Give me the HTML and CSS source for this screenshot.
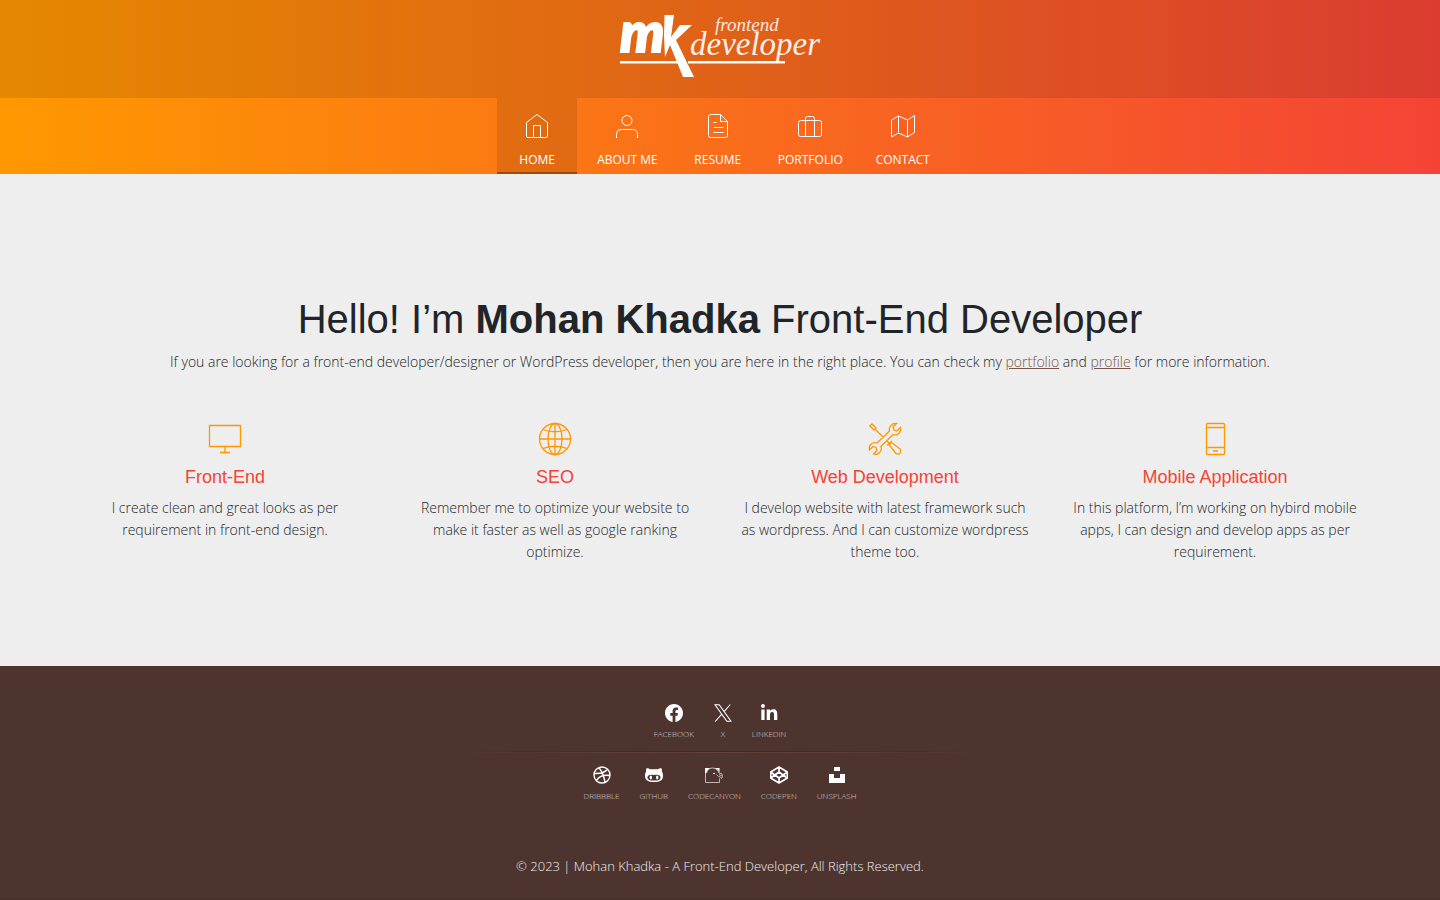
FILE: index.html
```html
<!DOCTYPE html>
<html lang="en">
<head>
<meta charset="utf-8">
<meta name="viewport" content="width=device-width, initial-scale=1">
<title>Mohan Khadka - Front-End Developer</title>
<link rel="stylesheet" href="styles.css">
</head>
<body>
<header class="header">
  <div class="brand">
    <a href="#" class="logo" aria-label="mk frontend developer">
      <svg width="200" height="66" viewBox="0 0 200 66">
        <text class="logo-m" x="0" y="37">m</text>
        <path d="M44.500 0h9.500l-3 22 9-12h12L56 25l18 37H63L50 30l-5 12-1-20z"/>
        <path d="M0 46h60v2.500H0zM68 46h97v2.500H68z"/>
        <text class="logo-top" x="95" y="16">frontend</text>
        <text class="logo-main" x="70" y="40">developer</text>
      </svg>
    </a>
  </div>
  <nav class="nav">
    <a href="#" class="nav-item active">
      <svg class="nav-icon" viewBox="0 0 26 26"><path d="M2.500 9.500 13 1.500l10.500 8V23q0 1.500-1.500 1.500H4Q2.500 24.500 2.500 23zM9.500 24.500v-12h7v12"/></svg>
      <span>HOME</span>
    </a>
    <a href="#" class="nav-item">
      <svg class="nav-icon" viewBox="0 0 26 26"><circle cx="13" cy="7.500" r="5"/><path d="M2.500 25v-3.500q0-5 5-5h11q5 0 5 5V25"/></svg>
      <span>ABOUT ME</span>
    </a>
    <a href="#" class="nav-item">
      <svg class="nav-icon" viewBox="0 0 26 26"><path d="M15.500 1.500h-10q-2 0-2 2v19q0 2 2 2h15q2 0 2-2v-14zv7h7M8.500 9.500h3M8.500 14.500h10M8.500 19.500h10"/></svg>
      <span>RESUME</span>
    </a>
    <a href="#" class="nav-item">
      <svg class="nav-icon" viewBox="0 0 26 26"><rect x="1.500" y="7.500" width="23" height="16" rx="2"/><path d="M8.500 23.500V5.500q0-2 2-2h5q2 0 2 2v18"/></svg>
      <span>PORTFOLIO</span>
    </a>
    <a href="#" class="nav-item">
      <svg class="nav-icon" viewBox="0 0 26 26"><path d="m1.500 7 7-4 9 4 7-4.500v17l-7 4.500-9-4-7 4zM8.500 3v17M17.500 7v17"/></svg>
      <span>CONTACT</span>
    </a>
  </nav>
</header>

<main class="main">
  <div class="container">
    <h1>Hello! I’m <strong>Mohan Khadka</strong> Front-End Developer</h1>
    <p class="intro">If you are looking for a front-end developer/designer or WordPress developer, then you are here in the right place. You can check my <a href="#">portfolio</a> and <a href="#">profile</a> for more information.</p>
    <div class="services">
      <section class="service">
        <svg class="service-icon" viewBox="0 0 34 34"><path d="M1.500 3.500h31v21h-31zM17 24.500v6M12 30.500h10"/></svg>
        <h2>Front-End</h2>
        <p>I create clean and great looks as per requirement in front-end design.</p>
      </section>
      <section class="service">
        <svg class="service-icon" viewBox="0 0 34 34"><circle cx="17" cy="17" r="15.500"/><ellipse cx="17" cy="17" rx="7" ry="15.500"/><path d="M17 1.500v31M1.500 17h31M5 7.500q12 4.500 24 0M5 26.500q12-4.500 24 0"/></svg>
        <h2>SEO</h2>
        <p>Remember me to optimize your website to make it faster as well as google ranking optimize.</p>
      </section>
      <section class="service">
        <svg class="service-icon" viewBox="0 0 34 34"><path d="M21.500 9c-1-4 2-8 7-7.500L25 5l1 3 3 1 3.500-3.500c1 5-3 8.500-7.500 7L13 24.500c1.500 5-3 9-7.500 7.500L9 28.500l-1-3-3-1L1.500 28c-1-5 3-8.500 7.500-7zM1.800 4 4 2l4 4-2 2zM7 7l8.500 8.500M18.500 18.500l4 4M19 23.500l5-4.500M21 22.500l6.500 8.500c3 3 7-1 4.500-4l-8.500-6.500"/></svg>
        <h2>Web Development</h2>
        <p>I develop website with latest framework such as wordpress. And I can customize wordpress theme too.</p>
      </section>
      <section class="service">
        <svg class="service-icon" viewBox="0 0 34 34"><rect x="8.500" y="1.500" width="18" height="31" rx="1"/><path d="M8.500 5.500h18M8.500 25.500h18M15 29h5"/></svg>
        <h2>Mobile Application</h2>
        <p>In this platform, I’m working on hybird mobile apps, I can design and develop apps as per requirement.</p>
      </section>
    </div>
  </div>
</main>

<footer class="footer">
  <div class="social">
    <a href="#"><svg viewBox="0 0 16 16"><path d="M16 8.049c0-4.446-3.582-8.050-8-8.050C3.580 0-.002 3.603-.002 8.050c0 4.017 2.926 7.347 6.750 7.951v-5.625h-2.030V8.050H6.750V6.275c0-2.017 1.195-3.131 3.022-3.131.876 0 1.791.157 1.791.157v1.980h-1.009c-.993 0-1.303.621-1.303 1.258v1.510h2.218l-.354 2.326H9.250V16c3.824-.604 6.750-3.934 6.750-7.951"/></svg><span>FACEBOOK</span></a>
    <a href="#"><svg viewBox="0 0 18 18"><path fill="none" stroke="#fff" stroke-width="1.100" d="M1 .7h4.200L17 17.300h-4.200zM16.300.5 10 7.700M7.800 10.200 1.200 17.500"/></svg><span>X</span></a>
    <a href="#"><svg viewBox="0 0 18 18"><path d="M1.300 5.500h3.300V16H1.300z"/><circle cx="2.950" cy="2" r="2"/><path d="M6.700 5.500h3.200v1.500C10.500 5.900 11.700 5.200 13.200 5.200c3.200 0 4.100 2 4.100 5V16H14v-5.100c0-1.600-.1-2.900-1.900-2.900-1.700 0-2.100 1.200-2.100 2.800V16H6.700z"/></svg><span>LINKEDIN</span></a>
  </div>
  <hr class="divider">
  <div class="social">
    <a href="#"><svg viewBox="0 0 18 18"><path fill="none" stroke="#fff" stroke-width="1.400" d="M9 1a8 8 0 1 0 0 16A8 8 0 0 0 9 1zM6 1.700Q10.500 7 12 16.300M1.300 7.500Q10.500 8 14.500 3.200M3.500 14.700Q7 8 17 9.500"/></svg><span>DRIBBBLE</span></a>
    <a href="#"><svg viewBox="0 0 18 18"><path fill-rule="evenodd" d="M1.500 2.200c1.800 0 3 .5 4 1h7c1-.5 2.200-1 4-1 .5 1.300.5 2.300.3 3.400C17.600 6.700 18 8 18 9.800c0 4.700-3 6.200-9 6.200s-9-1.500-9-6.200C0 8 .4 6.700 1.200 5.600 1 4.500 1 3.500 1.500 2.200zM6 8.800c-2.200 0-3.500 1-3.500 2.800 0 2.500 2.500 3 6.500 3s6.500-.5 6.500-3c0-1.800-1.300-2.800-3.500-2.800-1.200 0-2 .2-3 .2s-1.800-.2-3-.2z"/><ellipse cx="5.800" cy="11.500" rx="1.200" ry="2"/><ellipse cx="12.200" cy="11.500" rx="1.200" ry="2"/></svg><span>GITHUB</span></a>
    <a href="#"><svg viewBox="0 0 18 18"><path d="M0 2h6C3.500 3 2 4.500 1.500 7L0 8zM8.500 2h6v5Q13.500 3 8.500 2z"/><path fill="none" stroke="#cbc3c1" stroke-width=".9" d="M.5 7v9.500h14v-4M1.500 7Q3 2 7.500 2t6.500 5q3-.5 4 3l-1.500 2.500q-.5-2-3-2l-2-2M14 8.500l3 1.500"/><path d="M8 7h2v1H8z"/></svg><span>CODECANYON</span></a>
    <a href="#"><svg viewBox="0 0 18 18"><path fill="none" stroke="#fff" stroke-width="1.700" stroke-linejoin="round" d="m9 1 8.300 5v6L9 17 .7 12V6zM9 1v5M9 12v5M.7 6 9 12l8.300-6M.7 12 9 6l8.300 6"/></svg><span>CODEPEN</span></a>
    <a href="#"><svg viewBox="0 0 18 18"><path d="M6 1h6v4H6zM1 8h5v4h6V8h5v9H1z"/></svg><span>UNSPLASH</span></a>
  </div>
  <p class="copyright">© 2023 | Mohan Khadka - A Front-End Developer, All Rights Reserved.</p>
</footer>
</body>
</html>
```
FILE: styles.css
```css
* { box-sizing: border-box; }

body {
  margin: 0;
  min-height: 100vh;
  display: flex;
  flex-direction: column;
  background: #eee;
  color: #212529;
  font: 300 14px/22px "Open Sans", sans-serif;
}

h1, h2, p { margin: 0; }
svg { display: block; fill: currentColor; }

.header { background: linear-gradient(90deg, #ff9800, #f44336); }

.brand {
  display: flex;
  justify-content: center;
  padding: 15px 0 17px;
  background: rgba(0, 0, 0, .1);
}
.logo { color: #fff; }
.logo svg { overflow: visible; }
.logo-m {
  font: italic 900 56px "Liberation Sans Narrow", Lato, sans-serif;
  stroke: #fff;
  stroke-width: 2;
}
.logo-top { font: italic 400 19px "Liberation Serif", serif; opacity: .85; }
.logo-main { font: italic 400 33px "Liberation Serif", serif; opacity: .9; }

.nav {
  display: flex;
  justify-content: center;
  gap: 10px;
}
.nav-item {
  display: flex;
  flex-direction: column;
  align-items: center;
  gap: 11px;
  min-width: 80px;
  padding: 15px 10px 2px;
  border-bottom: 2px solid transparent;
  color: #fff;
  font-size: 12px;
  line-height: 20px;
  font-weight: 400;
  text-decoration: none;
}
.nav-item.active {
  background: rgba(0, 0, 0, .1);
  border-bottom-color: rgba(0, 0, 0, .3);
}
.nav-icon {
  width: 26px;
  height: 26px;
  fill: none;
  stroke: #fff;
  stroke-width: 1;
}

.main {
  flex: 1;
  display: flex;
  align-items: center;
  justify-content: center;
  padding: 42px 0 24px;
}
.container {
  width: 100%;
  max-width: 1320px;
  text-align: center;
}
h1 {
  margin-bottom: 8px;
  font: 400 40px/48px "Liberation Sans", Arial, sans-serif;
}
h1 strong { font-weight: 700; }
.intro { margin-bottom: 49px; }
.intro a { color: #795548; }

.services {
  display: grid;
  grid-template-columns: repeat(auto-fit, minmax(240px, 1fr));
}
.service { padding: 0 16px; }
.service-icon {
  width: 34px;
  height: 34px;
  margin: 0 auto 10px;
  fill: none;
  stroke: #ff9800;
  stroke-width: 1.300;
}
.service h2 {
  margin-bottom: 9px;
  color: #f44336;
  font: 400 18px/22px "Liberation Sans", Arial, sans-serif;
}

.footer {
  padding: 38px 12px 22px;
  border-bottom: 1px solid #472f29;
  background: #4e342e;
  color: #fff;
}
.social {
  display: flex;
  justify-content: center;
  gap: 20px;
}
.social a {
  display: flex;
  flex-direction: column;
  align-items: center;
  gap: 6px;
  color: #fff;
  font-size: 8px;
  line-height: 12px;
  text-decoration: none;
}
.social svg { width: 18px; height: 18px; }
.social span { opacity: .7; }
.divider {
  width: 540px;
  max-width: 100%;
  height: 2px;
  margin: 11px auto 13px;
  border: 0;
  background:
    linear-gradient(90deg, transparent, #3e2823, transparent) top / 100% 1px no-repeat,
    linear-gradient(90deg, transparent, #64443a, transparent) bottom / 100% 1px no-repeat;
}
.copyright {
  margin-top: 53px;
  font-size: 13px;
  text-align: center;
  color: #eee;
}
```
